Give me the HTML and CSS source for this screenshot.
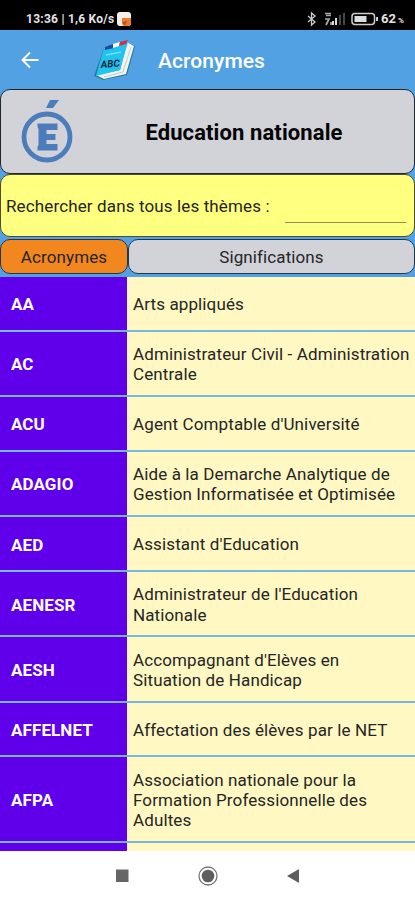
FILE: index.html
```html
<!DOCTYPE html>
<html lang="fr">
<head>
<meta charset="utf-8">
<title>Acronymes</title>
<link rel="stylesheet" href="styles.css">
</head>
<body>
<div class="screen">
  <div class="status">
    <span class="clock">13:36 | 1,6 Ko/s</span>
    <svg class="app" width="14" height="14" viewBox="0 0 14 14"><rect width="14" height="14" rx="3" fill="#f5eee9"/><path d="M5 6h9v5a3 3 0 0 1-3 3H8a3 3 0 0 1-3-3z" fill="#ec7c2d"/><path d="M5 10l5-1-2 5z" fill="#bd4f18"/></svg>
    <svg class="sys" width="74" height="16" viewBox="0 0 74 16">
      <path d="M1 5l7 6-3.500 3V2L8 5l-7 6" fill="none" stroke="#ccc" stroke-width="1.300"/>
      <path d="M18 2.500h6M19 4.500h5M18 8h4l-3 6M24 14v-3" fill="none" stroke="#aaa" stroke-width="1.700"/>
      <path d="M26 14v-4M29 14V7" stroke="#ddd" stroke-width="2"/><path d="M33 14V4M37 14V2" stroke="#484848" stroke-width="2"/>
      <rect x="45" y="2.500" width="22.500" height="11" rx="3" fill="none" stroke="#ccc" stroke-width="1.500"/><rect x="47.500" y="5" width="12" height="6" fill="#ddd"/><path d="M70 6v4" stroke="#ccc" stroke-width="2"/>
    </svg>
    <span class="battery">62</span><span class="pct">%</span>
  </div>
  <div class="appbar">
    <svg class="back" width="18" height="18" viewBox="0 0 18 18"><path d="M17.500 9H2M9 1.500L1.500 9 9 16.500" fill="none" stroke="#fff" stroke-width="1.900"/></svg>
    <svg class="book" width="44" height="42" viewBox="0 0 44 42">
      <path d="M1 36L11 8l23-6 8 4-8 29-24 5z" fill="#267b9d"/>
      <path d="M34 2l7 4-8 28-22 5-8-4 24-5z" fill="#f1f4ef"/>
      <path d="M38 7l-8 25-19 5" fill="none" stroke="#b4c6c8" stroke-width=".8"/>
      <path d="M11 8l24-6-8 28-24 6z" fill="#22c3ee"/>
      <path d="M12 7l8-3 1 4-9 2z" fill="#1c4ba5"/><path d="M20 4l7-2-1 4-6 2z" fill="#fff"/><path d="M27 2l8-2-2 4-7 2z" fill="#d52d4d"/>
      <path d="M13 15l15-3" stroke="#72e0fa" stroke-width="1.500"/>
      <text x="8" y="28" transform="rotate(-5 8 27)" class="abc">ABC</text>
    </svg>
    <h1>Acronymes</h1>
  </div>
  <div class="theme">
    <svg class="logo" width="54" height="66" viewBox="0 0 54 66"><circle cx="27" cy="38" r="23" fill="none" stroke="#4c7dbb" stroke-width="4.800"/><path d="M30 1h9l-6 8h-7z" fill="#4c7dbb"/><path d="M17.500 24.500h20v6.500H26.500v4h9v6h-9v4h11v6.500h-20v-4l1-1.500V30l-1-2z" fill="#4c7dbb"/></svg>
    <h2>Education nationale</h2>
  </div>
  <div class="search"><label for="q">Rechercher dans tous les thèmes :</label><input id="q" type="text"></div>
  <div class="heads"><div class="head active">Acronymes</div><div class="head">Significations</div></div>
  <div class="list">
    <div class="row"><b>AA</b><p>Arts appliqués</p></div>
    <div class="row two"><b>AC</b><p>Administrateur Civil - Administration<br>Centrale</p></div>
    <div class="row"><b>ACU</b><p>Agent Comptable d'Université</p></div>
    <div class="row two"><b>ADAGIO</b><p>Aide à la Demarche Analytique de<br>Gestion Informatisée et Optimisée</p></div>
    <div class="row"><b>AED</b><p>Assistant d'Education</p></div>
    <div class="row two"><b>AENESR</b><p>Administrateur de l'Education<br>Nationale</p></div>
    <div class="row two"><b>AESH</b><p>Accompagnant d'Elèves en<br>Situation de Handicap</p></div>
    <div class="row"><b>AFFELNET</b><p>Affectation des élèves par le NET</p></div>
    <div class="row three"><b>AFPA</b><p>Association nationale pour la<br>Formation Professionnelle des<br>Adultes</p></div>
    <div class="row"><b></b><p></p></div>
  </div>
  <div class="nav">
    <svg width="190" height="22" viewBox="0 0 190 22"><rect x="3" y="4.500" width="12.500" height="12.500" fill="#666"/><circle cx="95" cy="11" r="9" fill="none" stroke="#777" stroke-width="1.300"/><circle cx="95" cy="11" r="6.300" fill="#5e5e5e"/><path d="M174 11l12-7v14z" fill="#5e5e5e"/></svg>
  </div>
</div>
</body>
</html>
```
FILE: styles.css
```css
* { box-sizing: border-box; }
body { margin: 0; font-family: Roboto, sans-serif; color: #252525; }
h1, h2, p { margin: 0; }
svg { display: block; flex: none; }
.screen { width: 415px; height: 900px; display: flex; flex-direction: column; overflow: hidden; background: #52a2e3; }
.status { height: 30px; flex: none; background: #000; color: #e4e4e4; display: flex; padding: 11px 0 0 26px; font-size: 12px; line-height: 16px; font-weight: 700; white-space: nowrap; }
.clock { width: 91px; letter-spacing: .25px; }
.app { margin-top: 1px; }
.sys { margin-left: 176px; }
.battery { width: 17px; font-size: 13px; }
.pct { font-size: 8px; line-height: 20px; }
.appbar { height: 59px; flex: none; display: flex; align-items: center; padding-left: 21px; color: #fff; }
.book { margin-left: 54px; margin-top: 2px; }
.abc { font: italic 700 10px Roboto, sans-serif; fill: #10273e; }
h1 { margin-left: 21px; font-size: 21px; font-weight: 500; line-height: 28px; padding-top: 3px; letter-spacing: .08px; }
.theme { height: 85px; flex: none; display: flex; align-items: center; background: #d2d2d9; border: 1.500px solid #20272f; border-radius: 10px; padding-left: 19px; }
.logo { margin-top: 0; }
h2 { flex: 1; font-size: 22px; font-weight: 700; color: #050505; text-align: center; padding-right: 0; padding-top: 2px; letter-spacing: .1px; }
.search { height: 63px; flex: none; display: flex; align-items: center; background: #ffff80; border: 1px solid #4b4e35; border-radius: 10px; padding: 0 8px 0 5px; font-size: 17px; letter-spacing: .13px; }
.search label { width: 279px; white-space: nowrap; }
.search input { width: 121px; height: 34px; border: 0; border-bottom: 1px solid #8d8d58; background: transparent; padding: 0; outline: 0; }
.heads { display: grid; grid-template-columns: 128px 1fr; height: 40px; flex: none; padding: 2px 0 3px; }
.head { height: 35px; background: #d2d2d9; border: 1px solid #20384d; border-radius: 10px; display: flex; align-items: center; justify-content: center; font-size: 17px; letter-spacing: .1px; }
.active { background: #f28720; }
.list { height: 574px; flex: none; overflow: hidden; }
.row { display: grid; grid-template-columns: 127px 1fr; height: 54.700px; border-bottom: 2px solid #78b7df; }
.two { height: 65.400px; }
.three { height: 85.200px; }
.row b { background: #6000eb; color: #fff; display: flex; align-items: center; padding: 2px 0 0 11px; font-size: 17px; letter-spacing: .1px; }
.row p { background: #fff8c3; display: flex; align-items: center; padding: 2px 0 0 6px; font-size: 17px; line-height: 20.200px; letter-spacing: .12px; white-space: nowrap; }
.nav { flex: 1; background: #fff; padding: 14px 0 0 113px; }
```
